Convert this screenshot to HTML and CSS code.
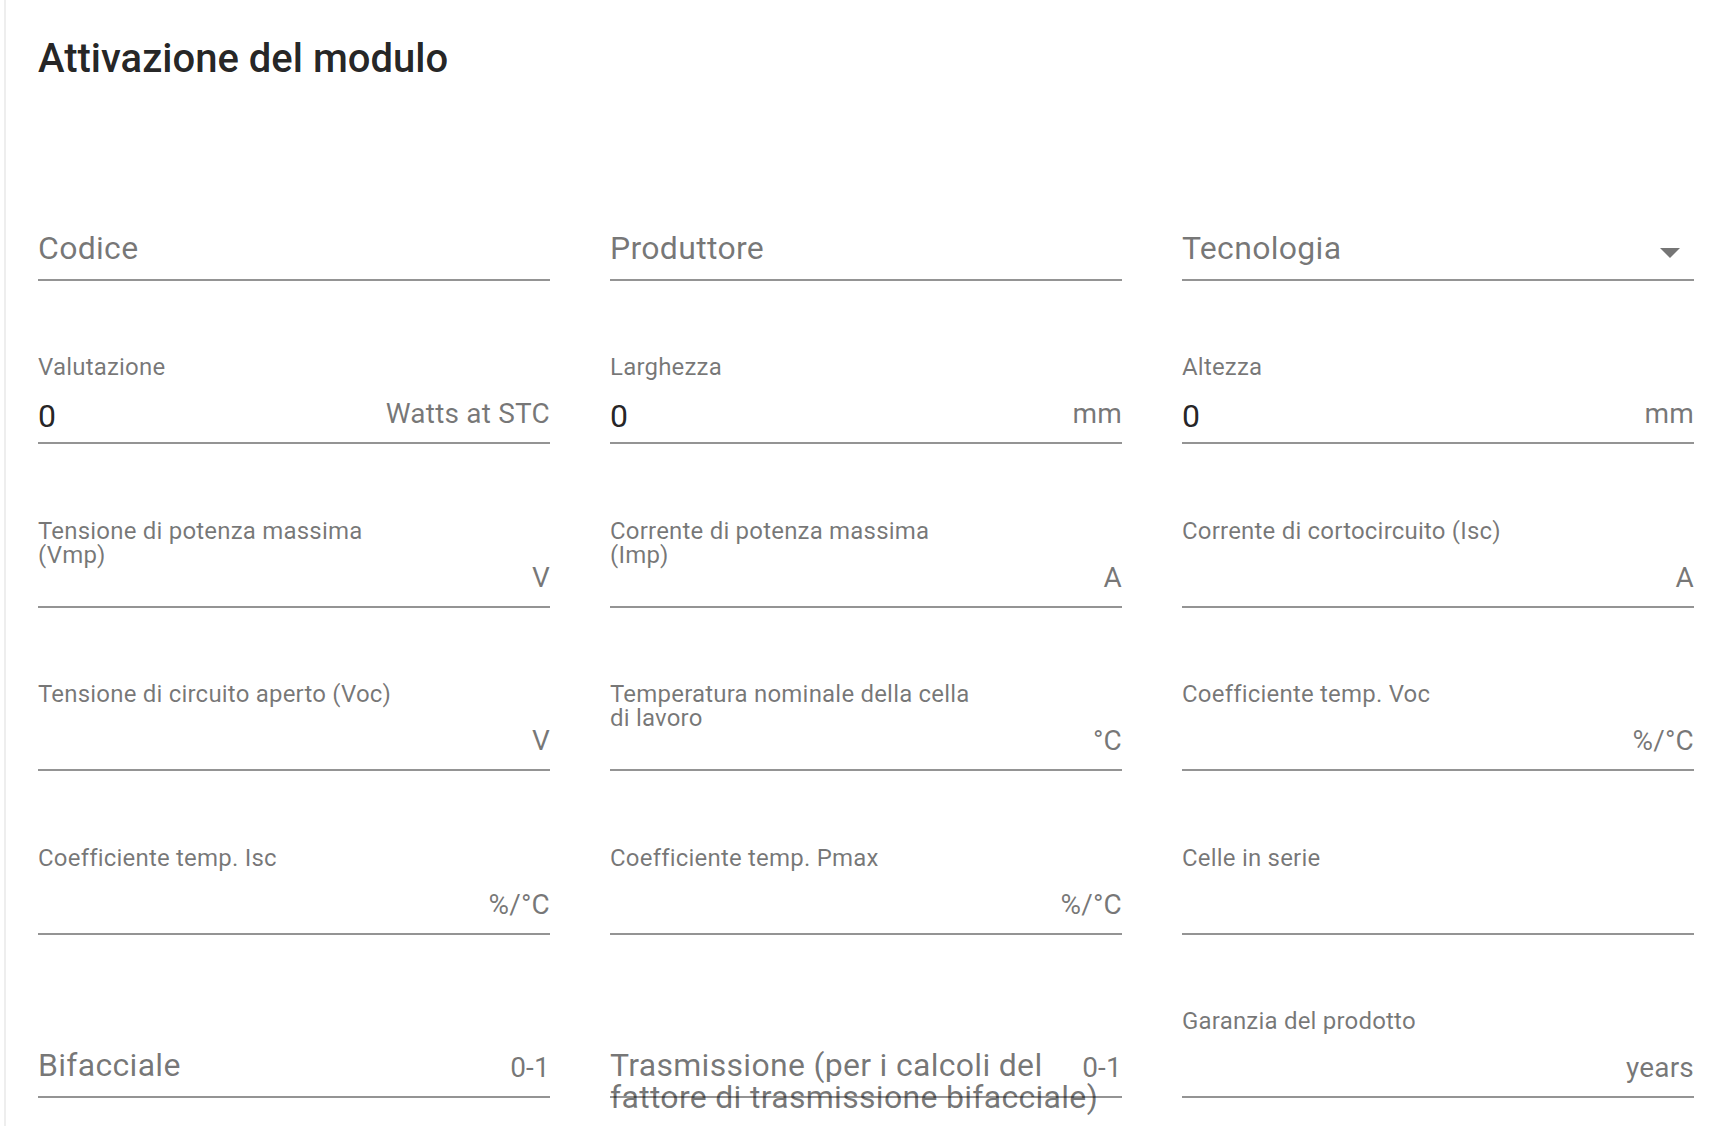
FILE: index.html
```html
<!DOCTYPE html>
<html lang="it">
<head>
  <meta charset="UTF-8">
  <meta name="viewport" content="width=device-width, initial-scale=1.0">
  <title>Attivazione del modulo</title>
  <link rel="stylesheet" href="styles.css">
</head>
<body>
  <div class="panel">
    <h2 class="title">Attivazione del modulo</h2>

    <div class="form-grid">
      <!-- Row 1 -->
      <div class="field field-plain">
        <div class="input-row"><span class="ph">Codice</span></div>
      </div>
      <div class="field field-plain">
        <div class="input-row"><span class="ph">Produttore</span></div>
      </div>
      <div class="field field-plain">
        <div class="input-row">
          <span class="ph">Tecnologia</span>
          <svg class="caret" width="48" height="48" viewBox="0 0 48 48"><path d="M14 20l10 10 10-10z"/></svg>
        </div>
      </div>

      <!-- Row 2 -->
      <div class="field">
        <label class="label">Valutazione</label>
        <div class="input-row"><span class="value">0</span><span class="unit">Watts at STC</span></div>
      </div>
      <div class="field">
        <label class="label">Larghezza</label>
        <div class="input-row"><span class="value">0</span><span class="unit">mm</span></div>
      </div>
      <div class="field">
        <label class="label">Altezza</label>
        <div class="input-row"><span class="value">0</span><span class="unit">mm</span></div>
      </div>

      <!-- Row 3 -->
      <div class="field">
        <label class="label">Tensione di potenza massima (Vmp)</label>
        <div class="input-row"><span class="unit">V</span></div>
      </div>
      <div class="field">
        <label class="label">Corrente di potenza massima (Imp)</label>
        <div class="input-row"><span class="unit">A</span></div>
      </div>
      <div class="field">
        <label class="label">Corrente di cortocircuito (Isc)</label>
        <div class="input-row"><span class="unit">A</span></div>
      </div>

      <!-- Row 4 -->
      <div class="field">
        <label class="label">Tensione di circuito aperto (Voc)</label>
        <div class="input-row"><span class="unit">V</span></div>
      </div>
      <div class="field">
        <label class="label">Temperatura nominale della cella di lavoro</label>
        <div class="input-row"><span class="unit">°C</span></div>
      </div>
      <div class="field">
        <label class="label">Coefficiente temp. Voc</label>
        <div class="input-row"><span class="unit">%/°C</span></div>
      </div>

      <!-- Row 5 -->
      <div class="field">
        <label class="label">Coefficiente temp. Isc</label>
        <div class="input-row"><span class="unit">%/°C</span></div>
      </div>
      <div class="field">
        <label class="label">Coefficiente temp. Pmax</label>
        <div class="input-row"><span class="unit">%/°C</span></div>
      </div>
      <div class="field">
        <label class="label">Celle in serie</label>
        <div class="input-row"></div>
      </div>

      <!-- Row 6 -->
      <div class="field field-plain">
        <div class="input-row"><span class="ph">Bifacciale</span><span class="unit">0-1</span></div>
      </div>
      <div class="field field-plain">
        <div class="input-row"><span class="ph">Trasmissione (per i calcoli del fattore di trasmissione bifacciale)</span><span class="unit">0-1</span></div>
      </div>
      <div class="field">
        <label class="label">Garanzia del prodotto</label>
        <div class="input-row"><span class="unit">years</span></div>
      </div>
    </div>
  </div>
</body>
</html>
```

FILE: styles.css
```css
body {
  margin: 0;
  padding: 0;
  font-family: Roboto, 'Liberation Sans', sans-serif;
  background: #fff;
  color: rgba(0, 0, 0, 0.87);
}

.panel {
  box-sizing: border-box;
  min-height: 100vh;
  margin-left: 4px;
  border-left: 2px solid #eeeeee;
  padding: 27px 40px 0 32px;
}

.title {
  margin: 0 0 101px;
  font-size: 40px;
  font-weight: 500;
  line-height: 64px;
  color: rgba(0, 0, 0, 0.87);
}

.form-grid {
  display: grid;
  grid-template-columns: repeat(3, 512px);
  column-gap: 60px;
  row-gap: 74.4px;
}

.field {
  display: flex;
  flex-direction: column;
}

.field-plain {
  padding-top: 36px;
}

.label {
  display: block;
  height: 24px;
  max-width: 370px;
  margin-bottom: 12px;
  font-size: 24px;
  line-height: 24px;
  letter-spacing: 0.2px;
  color: rgba(0, 0, 0, 0.54);
}

.input-row {
  display: grid;
  grid-template-columns: 1fr auto;
  height: 51px;
  border-bottom: 2px solid rgba(0, 0, 0, 0.42);
}

.value {
  grid-column: 1;
  grid-row: 1;
  padding-top: 6px;
  font-size: 32px;
  line-height: 38px;
  color: rgba(0, 0, 0, 0.87);
}

.ph {
  grid-column: 1 / -1;
  grid-row: 1;
  max-width: 500px;
  padding-top: 4px;
  font-size: 32px;
  line-height: 32px;
  letter-spacing: 0.3px;
  color: rgba(0, 0, 0, 0.54);
}

.unit {
  grid-column: 2;
  grid-row: 1;
  padding-top: 9px;
  font-size: 28px;
  line-height: 28px;
  letter-spacing: 0.2px;
  white-space: nowrap;
  color: rgba(0, 0, 0, 0.54);
}

.caret {
  grid-column: 2;
  grid-row: 1;
  fill: rgba(0, 0, 0, 0.54);
}
```
